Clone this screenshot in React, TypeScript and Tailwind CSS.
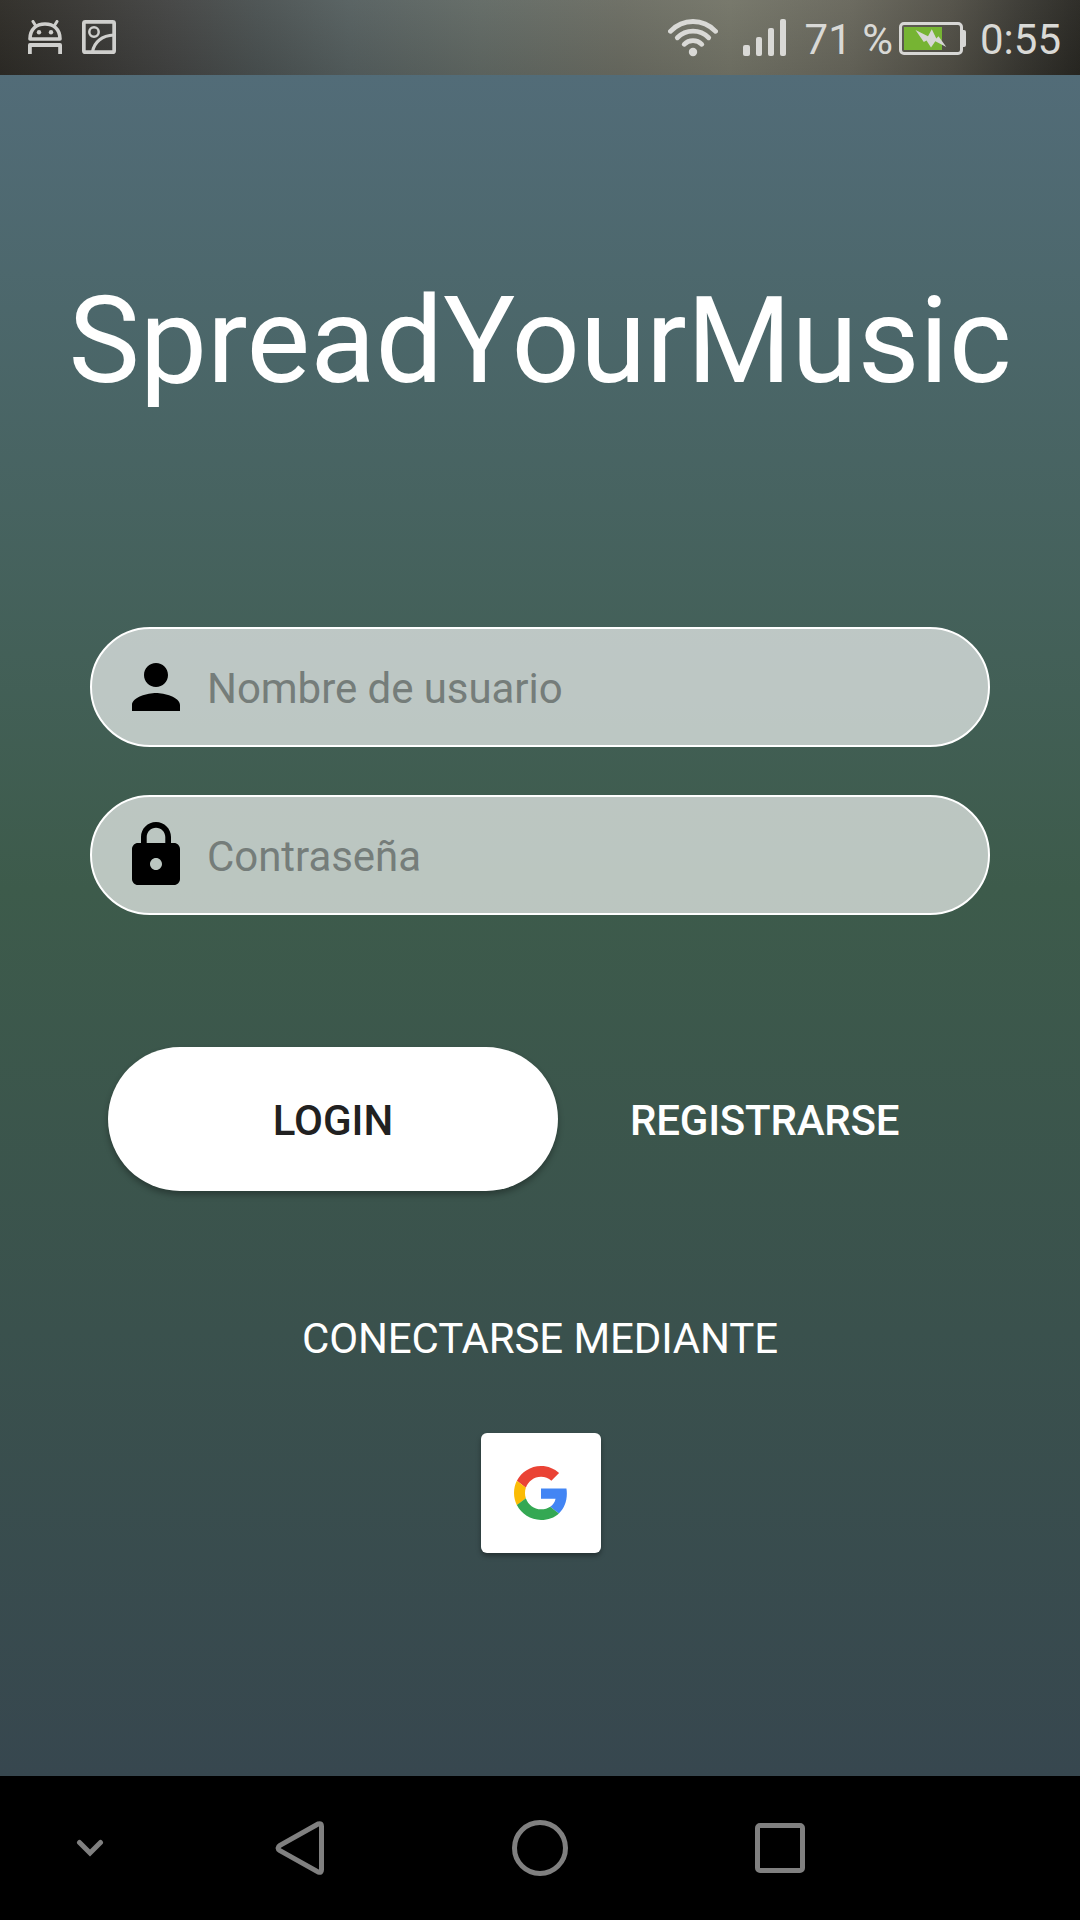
import type { ReactNode } from "react";

function AndroidIcon() {
  return (
    <svg width="34" height="34" viewBox="0 0 34 34" fill="none" stroke="#cfcfcd">
      <path d="M2 19C2 9 8.500 4 17 4s15 5 15 15z" strokeWidth="3.600" strokeLinejoin="round" />
      <path d="M5 1.500l2.800 4.500M29 1.500L26.200 6" strokeWidth="3" strokeLinecap="round" />
      <circle cx="11" cy="12.300" r="2.200" fill="#cfcfcd" stroke="none" />
      <circle cx="23" cy="12.300" r="2.200" fill="#cfcfcd" stroke="none" />
      <path d="M1.900 34V25h30.200v9" strokeWidth="3.800" strokeLinejoin="round" />
    </svg>
  );
}

function GalleryIcon() {
  return (
    <svg width="34" height="34" viewBox="0 0 34 34" fill="none" stroke="#cfcfcd">
      <rect x="1.850" y="1.850" width="30.300" height="30.300" rx="1.500" strokeWidth="3.700" />
      <circle cx="12" cy="12" r="4.700" strokeWidth="2.500" />
      <path d="M10.500 32C12 22 20 15.500 32 15" strokeWidth="3.200" />
    </svg>
  );
}

function WifiIcon() {
  return (
    <svg width="50" height="38" viewBox="0 0 50 38" fill="none" stroke="#d9d9d6" strokeWidth="4.800" strokeLinecap="round">
      <path d="M2.400 12.300C15 -.8 35 -.8 47.600 12.300" />
      <path d="M9.300 18.800C18 10 32 10 40.700 18.800" />
      <path d="M16.200 25.300C21 20.300 29 20.300 33.800 25.300" />
      <circle cx="25" cy="33" r="4.200" fill="#d9d9d6" stroke="none" />
    </svg>
  );
}

function SignalIcon() {
  return (
    <svg width="43" height="37" viewBox="0 0 43 37" fill="#d9d9d6">
      <rect x="0" y="26" width="7" height="11" rx="2" />
      <rect x="13" y="18" width="6" height="19" rx="2" />
      <rect x="25" y="9" width="6" height="28" rx="2" />
      <rect x="37" y="0" width="6" height="37" rx="2" />
    </svg>
  );
}

function BatteryIcon() {
  return (
    <svg width="67" height="33" viewBox="0 0 67 33">
      <rect x="5" y="5" width="38" height="23" fill="#76b433" />
      <rect x="1.500" y="1.500" width="61" height="30" rx="3.500" fill="none" stroke="#d7d7d5" strokeWidth="3" />
      <path d="M63 8h2a2 2 0 0 1 2 2v13a2 2 0 0 1-2 2h-2z" fill="#d7d7d5" />
      <path d="M16.500 8L29 14.300 32.800 7.300 37.300 16.500 39.500 14.200 47.300 25 36.300 19.300 32 25.500 27.500 18.500 24.800 20z" fill="#d7d7d5" />
    </svg>
  );
}

function GoogleLogo() {
  return (
    <svg width="54" height="54" viewBox="0 0 48 48">
      <path fill="#EA4335" d="M24 9.500c3.540 0 6.710 1.220 9.210 3.600l6.850-6.850C35.900 2.380 30.470 0 24 0 14.620 0 6.510 5.380 2.560 13.220l7.980 6.190C12.430 13.720 17.740 9.500 24 9.500z" />
      <path fill="#4285F4" d="M46.980 24.550c0-1.570-.15-3.090-.38-4.550H24v9.020h12.940c-.58 2.960-2.260 5.480-4.780 7.180l7.730 6c4.510-4.180 7.090-10.360 7.090-17.650z" />
      <path fill="#FBBC05" d="M10.530 28.590c-.48-1.450-.76-2.990-.76-4.590s.27-3.140.76-4.590l-7.980-6.190C.92 16.460 0 20.120 0 24c0 3.880.92 7.540 2.560 10.780l7.970-6.190z" />
      <path fill="#34A853" d="M24 48c6.480 0 11.930-2.130 15.890-5.810l-7.730-6c-2.150 1.450-4.920 2.300-8.160 2.300-6.260 0-11.570-4.220-13.470-9.910l-7.980 6.190C6.510 42.620 14.620 48 24 48z" />
    </svg>
  );
}

function Field({ icon, type, placeholder }: { icon: ReactNode; type: string; placeholder: string }) {
  return (
    <label className="flex h-[120px] items-center rounded-full border-2 border-white bg-white/65 pl-7">
      <span className="flex w-[72px] shrink-0 justify-center">{icon}</span>
      <input
        type={type}
        placeholder={placeholder}
        className="ml-[15px] h-[52px] min-w-0 flex-1 bg-transparent pt-0.5 text-[42px] leading-[50px] tracking-[-0.05px] text-black outline-none placeholder:text-[#757d7a] placeholder:opacity-100"
      />
    </label>
  );
}

export default function App() {
  return (
    <div className="flex h-[1920px] w-[1080px] flex-col overflow-hidden bg-black font-['Roboto',sans-serif]">
      <header className="flex h-[75px] shrink-0 items-start bg-[linear-gradient(180deg,rgba(255,255,255,0.03),rgba(0,0,0,0.08)),linear-gradient(90deg,#2e2c27_0px,#393835_90px,#434443_170px,#4b5252_260px,#566060_350px,#626a65_480px,#6b6d63_620px,#747568_730px,#68675c_850px,#525047_950px,#3a3933_1020px,#292823_1080px)] text-[42px] leading-[49px] text-[#d9d9d6]">
        <div className="ml-7 mt-5 flex gap-5">
          <AndroidIcon />
          <GalleryIcon />
        </div>
        <div className="ml-auto flex pr-[19px]">
          <div className="mt-[19px]"><WifiIcon /></div>
          <div className="ml-[25px] mt-[19px]"><SignalIcon /></div>
          <span className="ml-[19px] mt-[15px] whitespace-nowrap">71 %</span>
          <div className="ml-[6px] mt-[22px]"><BatteryIcon /></div>
          <span className="ml-[14px] mt-[15px]">0:55</span>
        </div>
      </header>

      <main className="flex h-[1701px] shrink-0 flex-col bg-[linear-gradient(180deg,#526c78_0%,#3d5b4b_47.8%,#37474f_100%)] text-white">
        <h1 className="mt-[196px] text-center text-[120px] leading-[141px]">SpreadYourMusic</h1>
        <form className="mx-[90px] mt-[215px] flex flex-col gap-12" onSubmit={(e) => e.preventDefault()}>
          <Field
            type="text"
            placeholder="Nombre de usuario"
            icon={
              <svg width="72" height="72" viewBox="0 0 24 24">
                <path d="M12 12c2.210 0 4-1.790 4-4s-1.790-4-4-4-4 1.790-4 4 1.790 4 4 4zm0 2c-2.670 0-8 1.340-8 4v2h16v-2c0-2.660-5.330-4-8-4z" />
              </svg>
            }
          />
          <Field
            type="password"
            placeholder="Contraseña"
            icon={
              <svg width="72" height="72" viewBox="0 0 24 24">
                <path d="M18 8h-1V6c0-2.760-2.240-5-5-5S7 3.240 7 6v2H6c-1.100 0-2 .9-2 2v10c0 1.100.9 2 2 2h12c1.100 0 2-.9 2-2V10c0-1.100-.9-2-2-2zm-6 9c-1.100 0-2-.9-2-2s.9-2 2-2 2 .9 2 2-.9 2-2 2zm3.100-9H8.900V6c0-1.710 1.390-3.100 3.100-3.100 1.710 0 3.100 1.390 3.100 3.100v2z" />
              </svg>
            }
          />
        </form>

        <div className="ml-[108px] mt-[132px] flex h-36 text-[42px] font-medium">
          <button className="w-[450px] rounded-full bg-white pt-[3px] text-[#212121] shadow-[0_4px_6px_rgba(0,0,0,0.3)]">LOGIN</button>
          <button className="ml-[72px] pt-[3px] tracking-[-0.2px]">REGISTRARSE</button>
        </div>

        <p className="mt-[123px] text-center text-[42px] leading-[50px] tracking-[-0.12px]">CONECTARSE MEDIANTE</p>

        <button
          aria-label="Google"
          className="ml-[481px] mt-[69px] flex size-[120px] items-center justify-center rounded-md bg-white shadow-[0_3px_5px_rgba(0,0,0,0.35)]"
        >
          <GoogleLogo />
        </button>
      </main>

      <nav className="flex h-36 shrink-0 items-center text-[#808080]">
        <svg className="ml-[76px]" width="28" height="18" viewBox="0 0 28 18" fill="none" stroke="currentColor" strokeLinecap="round">
          <path d="M3.500 3.500L14 14 24.500 3.500" strokeWidth="5" />
        </svg>
        <svg className="ml-[171px]" width="50" height="56" viewBox="0 0 50 56" fill="none" stroke="currentColor">
          <path d="M43.500 3.800L5 25.400q-4 2.600 0 5.200L43.500 52.200q3 .8 3-2.500V6.300q0-3.300-3-2.500z" strokeWidth="5" />
        </svg>
        <svg className="ml-[187px]" width="56" height="56" viewBox="0 0 56 56" fill="none" stroke="currentColor">
          <circle cx="28" cy="28" r="25.500" strokeWidth="5" />
        </svg>
        <svg className="ml-[187px]" width="50" height="50" viewBox="0 0 50 50" fill="none" stroke="currentColor">
          <rect x="2.500" y="2.500" width="45" height="45" rx="2.500" strokeWidth="5" />
        </svg>
      </nav>
    </div>
  );
}
